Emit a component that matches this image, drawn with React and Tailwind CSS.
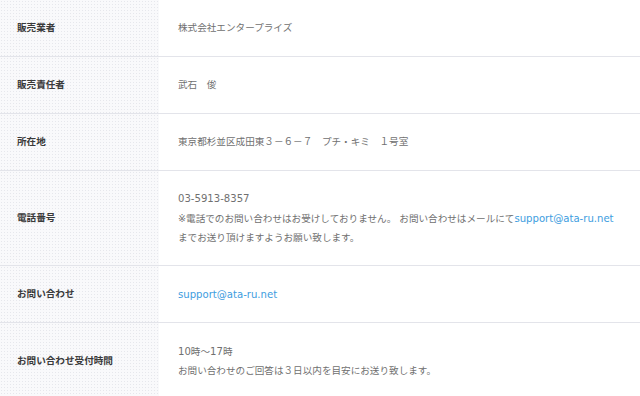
import React from 'react'

const font = { fontFamily: '"DejaVu Sans", "Noto Sans CJK JP", sans-serif' }

const Latin = ({ children, className = '' }) => (
    <span className={`text-[10.1px] ${className}`}>{children}</span>
)

const rows = [
    { label: '販売業者', lines: ['株式会社エンタープライズ'] },
    { label: '販売責任者', lines: ['武石　俊'] },
    { label: '所在地', lines: ['東京都杉並区成田東３－６－７　プチ・キミ　１号室'] },
    {
        label: '電話番号',
        lines: [
            <Latin>03-5913-8357</Latin>,
            <>※電話でのお問い合わせはお受けしておりません。 お問い合わせはメールにて<Latin className="text-[#3d9de0]">support@ata-ru.net</Latin></>,
            'までお送り頂けますようお願い致します。',
        ],
    },
    { label: 'お問い合わせ', lines: [<Latin className="text-[#3d9de0]">support@ata-ru.net</Latin>] },
    { label: 'お問い合わせ受付時間', lines: [<><Latin>10</Latin>時〜<Latin>17</Latin>時</>, 'お問い合わせのご回答は３日以内を目安にお送り致します。'] },
]

export default function App() {
    return (
        <div className="w-[640px] h-[396px] overflow-hidden bg-white" style={font}>
            {rows.map((row, i) => (
                <div key={i} className="grid grid-cols-[159px_1fr] border-b border-[#e3e4ea]">
                    <div className="flex items-center pl-[17px] bg-[#f9f9fb] bg-[radial-gradient(#e6e7ec_0.7px,transparent_0.9px)] bg-[length:3px_3px]">
                        <span className="text-[9.6px] font-bold text-[#3a3a3a] whitespace-nowrap">{row.label}</span>
                    </div>
                    <div className="py-[18.4px] pl-[19px] text-[9.6px] leading-[19.2px] text-[#707070]">
                        {row.lines.map((line, j) => (
                            <div key={j} className="whitespace-nowrap">{line}</div>
                        ))}
                    </div>
                </div>
            ))}
        </div>
    )
}
